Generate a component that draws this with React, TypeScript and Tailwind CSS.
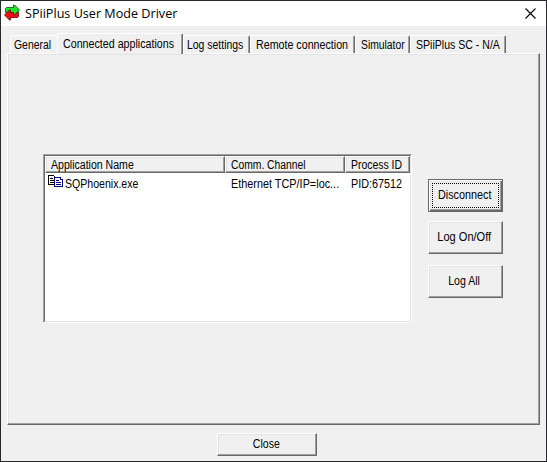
import React from 'react';

const tabs = [
  { label: 'General', box: 'w-[47px] pl-[3px]', text: 'scale-x-[0.87]' },
  { label: 'Connected applications', box: 'w-[126px] pl-[5px]', text: 'scale-x-[0.89]', active: true },
  { label: 'Log settings', box: 'w-[67px] pl-[3px]', text: 'scale-x-[0.87]' },
  { label: 'Remote connection', box: 'w-[105px] pl-[5px]', text: 'scale-x-[0.89]' },
  { label: 'Simulator', box: 'w-[55px] pl-[5px]', text: 'scale-x-[0.86]' },
  { label: 'SPiiPlus SC - N/A', box: 'w-[96px] pl-[5px]', text: 'scale-x-[0.88]' },
];

const raised =
  'border border-t-white border-l-white border-r-[#696969] border-b-[#696969] shadow-[inset_-1px_-1px_0_#a0a0a0,inset_1px_1px_0_#e3e3e3]';

function TabStrip() {
  return (
    <div className="flex h-5 items-end pl-[9px]">
      {tabs.map((t) => (
        <div
          key={t.label}
          className={`${t.box} relative shrink-0 whitespace-nowrap rounded-t-[2px] border-l border-t border-white ${
            t.active ? 'z-10 -mb-px h-[21px] pt-[3px]' : 'h-[18px] pt-[2px]'
          } ${t.label === 'General' ? '' : 'border-r border-r-[#696969] shadow-[inset_-1px_0_0_#a0a0a0]'} bg-[#f0f0f0] leading-[14px]`}
        >
          <span className={`${t.text} inline-block origin-left`}>{t.label}</span>
        </div>
      ))}
    </div>
  );
}

function Button({ label, className, text, focused }: { label: string; className: string; text: string; focused?: boolean }) {
  return (
    <button
      className={`${className} relative flex items-center justify-center pb-0.5 pr-0.5 whitespace-nowrap bg-[#f0f0f0] ${
        focused
          ? 'border border-[#696969] shadow-[inset_1px_1px_0_#fff,inset_-1px_-1px_0_#696969,inset_-2px_-2px_0_#a0a0a0,inset_2px_2px_0_#e3e3e3]'
          : raised
      }`}
    >
      {focused && <span className="absolute inset-[3px] border border-dotted border-black" />}
      <span className={`${text} inline-block`}>{label}</span>
    </button>
  );
}

function SwapIcon() {
  return (
    <svg className="mt-[3px] ml-[3px] h-[17px] w-4 shrink-0" viewBox="0 0 16 17" strokeWidth="0.9" strokeLinejoin="round">
      <path d="M1.5 8.5V4.5L2.5 3.5H9.5V1H10.5L15.5 6L10.5 11H9.5V8.5Z" fill="#1be52b" stroke="#145a14" />
      <path d="M14.5 8V12.5L13.5 13.5H6.5V16H5.5L.5 11L5.5 6H6.5V8.5H9.5V11H10.5L13.5 8Z" fill="#f50a12" stroke="#701010" />
    </svg>
  );
}

function DocsIcon() {
  return (
    <svg className="ml-[3px] h-[13px] w-4 shrink-0" viewBox="0 0 16 13" fill="#fff" shapeRendering="crispEdges">
      <path d="M.5 .5H5.5L7.5 2.5V9.5H.5Z" stroke="#000" />
      <path d="M2 3.5H5M2 5.5H6M2 7.5H6" stroke="#000" />
      <path d="M6.5 2.5H12.5L14.5 4.5V11.5H6.5Z" stroke="#000080" />
      <path d="M8 5.5H11M8 7.5H13M8 9.5H13M12.5 2.5V4.5H14.5" stroke="#000080" />
    </svg>
  );
}

function ApplicationList() {
  return (
    <div className="mt-[101px] ml-9 h-[169px] w-[369px] border border-t-[#a0a0a0] border-l-[#a0a0a0] border-r-white border-b-white bg-white">
      <div className="h-full border border-t-[#696969] border-l-[#696969] border-r-[#e3e3e3] border-b-[#e3e3e3]">
        <div className="flex h-[17px] whitespace-nowrap bg-[#f0f0f0] leading-[17px]">
          <div className={`${raised} w-[180px] pl-[5px]`}><span className="inline-block origin-left scale-x-[0.88]">Application Name</span></div>
          <div className={`${raised} w-[120px] pl-[5px]`}><span className="inline-block origin-left scale-x-[0.86]">Comm. Channel</span></div>
          <div className={`${raised} w-[65px] pl-[5px]`}><span className="inline-block origin-left scale-x-[0.87]">Process ID</span></div>
        </div>
        <div className="mt-0.5 flex h-[17px] whitespace-nowrap leading-[18px]">
          <div className="flex w-[180px]"><DocsIcon /><span className="ml-px inline-block origin-left scale-x-[0.88]">SQPhoenix.exe</span></div>
          <div className="w-[120px] pl-1.5"><span className="inline-block origin-left scale-x-[0.905]">Ethernet TCP/IP=loc...</span></div>
          <div className="w-[65px] pl-1.5"><span className="inline-block origin-left scale-x-[0.9]">PID:67512</span></div>
        </div>
      </div>
    </div>
  );
}

export default function App() {
  return (
    <div className="h-[462px] w-[547px] bg-[#29292b] p-px text-[12px] text-black [font-family:'Liberation_Sans',Arial,sans-serif]">
      <div className="flex h-[460px] w-[545px] flex-col bg-[#f0f0f0]">
        <header className="flex h-[25px] shrink-0 bg-white">
          <SwapIcon />
          <h1 className="ml-[5px] origin-left scale-x-[0.97] whitespace-nowrap text-[13px] leading-[24px] [font-family:'Open_Sans',sans-serif]">SPiiPlus User Mode Driver</h1>
          <svg className="mt-[7px] mr-[10px] ml-auto h-[11px] w-[11px]" viewBox="0 0 11 11" stroke="#000" strokeWidth="1.1">
            <path d="M.5 .5L10.5 10.5M10.5 .5L.5 10.5" />
          </svg>
        </header>
        <div className="mt-[7px]"><TabStrip /></div>
        <main className={`ml-1.5 flex h-[372px] w-[533px] shrink-0 ${raised}`}>
          <div className="-mt-px -ml-px"><ApplicationList /></div>
          <div className="mt-[125px] ml-4 flex flex-col">
            <Button label="Disconnect" className="h-[33px] w-[75px]" text="scale-x-[0.9]" focused />
            <Button label="Log On/Off" className="mt-[9px] h-[33px] w-[75px]" text="scale-x-[0.92]" />
            <Button label="Log All" className="mt-[11px] h-[33px] w-[75px]" text="scale-x-[0.88]" />
          </div>
        </main>
        <Button label="Close" className="mt-2 ml-[216px] h-[23px] w-[100px]" text="scale-x-[0.88]" />
      </div>
    </div>
  );
}
